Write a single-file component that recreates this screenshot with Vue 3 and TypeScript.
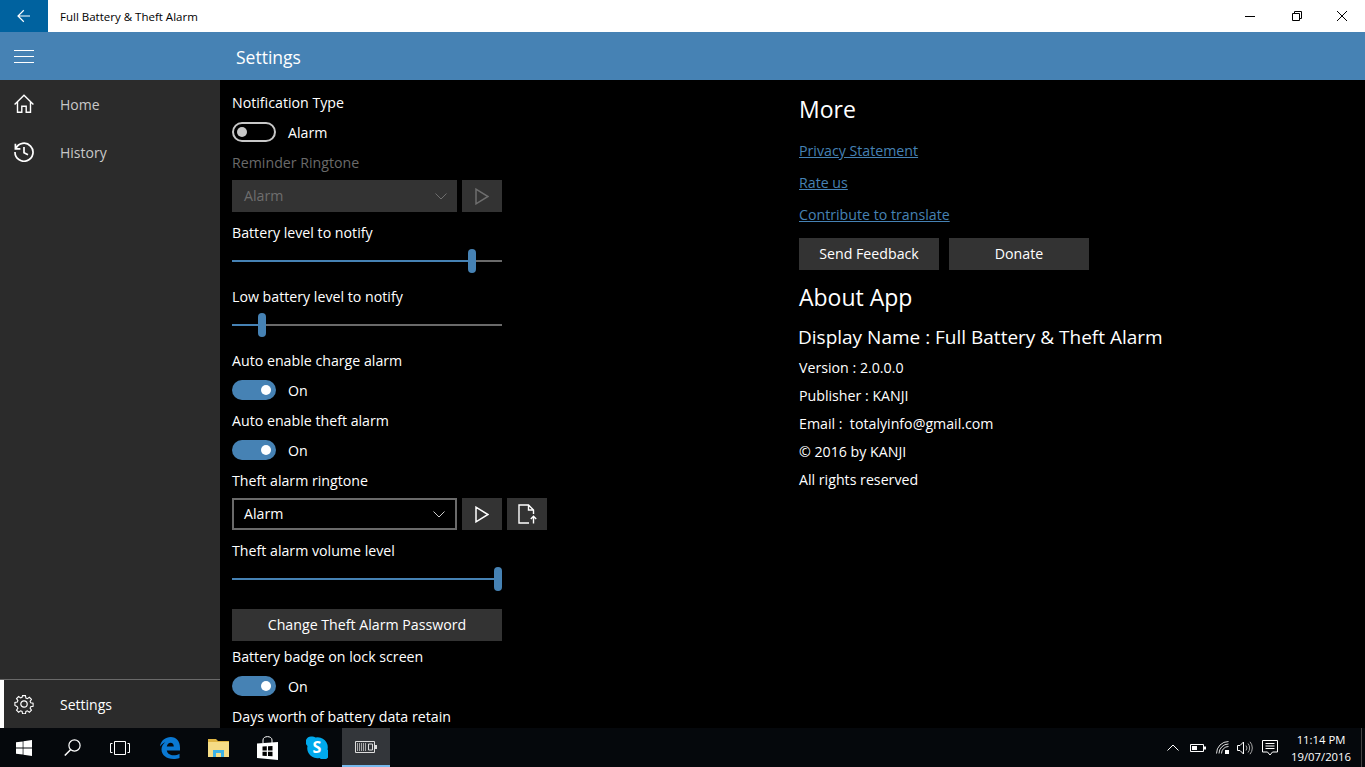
<script setup lang="ts">
const nav = [{ label: 'Home' }, { label: 'History' }]
const about = ['Version : 2.0.0.0', 'Publisher : KANJI', 'Email :  totalyinfo@gmail.com', '© 2016 by KANJI', 'All rights reserved']
</script>

<template>
  <div class="screen">
    <div class="titlebar">
      <div class="back">
        <svg width="14" height="14" viewBox="0 0 14 14" fill="none" stroke="#fff" stroke-width="1.2"><path d="M1 7h12M6.800 1.300 1 7l5.800 5.700" /></svg>
      </div>
      <div class="apptitle">Full Battery &amp; Theft Alarm</div>
      <div class="winbtns">
        <div class="winbtn"><svg width="12" height="12" viewBox="0 0 12 12" stroke="#000" fill="none"><path d="M1 6.500h10" /></svg></div>
        <div class="winbtn"><svg width="12" height="12" viewBox="0 0 12 12" stroke="#000" fill="none"><path d="M2.500 3.500h7v7h-7zM4.500 3.500v-2h7v7h-2" /></svg></div>
        <div class="winbtn"><svg width="12" height="12" viewBox="0 0 12 12" stroke="#000" fill="none"><path d="M1 1l10 10M11 1 1 11" /></svg></div>
      </div>
    </div>
    <div class="header">
      <div class="burger"><span></span><span></span><span></span></div>
      <div class="pagetitle">Settings</div>
    </div>
    <div class="body">
      <aside class="sidebar">
        <div class="navlist">
          <div v-for="(n, i) in nav" :key="n.label" class="navitem">
            <svg v-if="i === 0" class="navicon" width="20" height="20" viewBox="0 0 20 20" fill="none" stroke="#fff" stroke-width="1.4"><path d="M.6 10.600 10 1.200l9.400 9.400M3.500 8v10.300h4.300v-6h4.400v6h4.300V8" /></svg>
            <svg v-else class="navicon" width="20" height="20" viewBox="0 0 20 20" fill="none" stroke="#fff" stroke-width="1.700"><path d="M1.800 6.500A9 9 0 1 1 1 10M1.400 1.800v5h5M10 5v5.800l4 2" /></svg>
            <span class="navlabel">{{ n.label }}</span>
          </div>
        </div>
        <div class="navsettings">
          <svg class="navicon" width="20" height="20" viewBox="0 0 20 20" fill="none" stroke="#fff" stroke-width="1.2"><circle cx="10" cy="10" r="3.200" /><path d="M8.400.8h3.200l.5 2.600 1.600.7 2.200-1.500 2.300 2.300-1.500 2.200.7 1.600 2.600.5v3.200l-2.600.5-.7 1.600 1.500 2.200-2.300 2.300-2.200-1.500-1.600.7-.5 2.600H8.400l-.5-2.600-1.600-.7-2.200 1.500-2.300-2.300 1.500-2.200-.7-1.600L0 11.600V8.400l2.600-.5.7-1.600-1.500-2.200 2.300-2.300 2.200 1.500 1.600-.7z" transform="translate(.9 .9) scale(.91)" /></svg>
          <span class="navlabel white">Settings</span>
        </div>
      </aside>
      <main class="content">
        <section class="left">
          <div class="label first">Notification Type</div>
          <div class="toggle-row">
            <span class="toggle off"><i></i></span><span>Alarm</span>
          </div>
          <div class="label dim">Reminder Ringtone</div>
          <div class="controls">
            <div class="select disabled"><span>Alarm</span><svg width="12" height="7" viewBox="0 0 12 7" fill="none" stroke="#6e6e6e"><path d="M.5.5 6 6l5.500-5.500" /></svg></div>
            <div class="iconbtn"><svg width="14" height="17" viewBox="0 0 14 17" fill="none" stroke="#6e6e6e" stroke-width="1.500"><path d="M1 1.200v14.600L13 8.500z" /></svg></div>
          </div>
          <div class="label gap5">Battery level to notify</div>
          <div class="slider"><div class="fill f1"></div><div class="thumb t1"></div></div>
          <div class="label gap8">Low battery level to notify</div>
          <div class="slider"><div class="fill f2"></div><div class="thumb t2"></div></div>
          <div class="label gap8">Auto enable charge alarm</div>
          <div class="toggle-row"><span class="toggle on"><i></i></span><span>On</span></div>
          <div class="label">Auto enable theft alarm</div>
          <div class="toggle-row"><span class="toggle on"><i></i></span><span>On</span></div>
          <div class="label">Theft alarm ringtone</div>
          <div class="controls">
            <div class="select active"><span>Alarm</span><svg width="12" height="7" viewBox="0 0 12 7" fill="none" stroke="#ccc"><path d="M.5.5 6 6l5.500-5.500" /></svg></div>
            <div class="iconbtn"><svg width="14" height="17" viewBox="0 0 14 17" fill="none" stroke="#fff" stroke-width="1.500"><path d="M1 1.200v14.600L13 8.500z" /></svg></div>
            <div class="iconbtn"><svg width="19" height="20" viewBox="0 0 19 20" fill="none" stroke="#fff" stroke-width="1.400"><path d="M11 19H1V1h9.500l5 5v4M10.500 1v5h5M15.500 19.500v-7M12.800 15l2.700-2.700 2.700 2.700" /></svg></div>
          </div>
          <div class="label gap5">Theft alarm volume level</div>
          <div class="slider"><div class="fill f3"></div><div class="thumb t3"></div></div>
          <div class="widebtn">Change Theft Alarm Password</div>
          <div class="label">Battery badge on lock screen</div>
          <div class="toggle-row"><span class="toggle on"><i></i></span><span>On</span></div>
          <div class="label">Days worth of battery data retain</div>
        </section>
        <section class="right">
          <h2 class="more">More</h2>
          <a class="link">Privacy Statement</a>
          <a class="link">Rate us</a>
          <a class="link">Contribute to translate</a>
          <div class="btnrow"><div class="btn">Send Feedback</div><div class="btn">Donate</div></div>
          <h2 class="aboutapp">About App</h2>
          <div class="display">Display Name : Full Battery &amp; Theft Alarm</div>
          <div v-for="a in about" :key="a" class="aboutline">{{ a }}</div>
        </section>
      </main>
    </div>
    <footer class="taskbar">
      <div class="tb"><svg width="16" height="16" viewBox="0 0 16 16" fill="#fff"><path d="M0 2.300 6.700 1.400v6.200H0zM7.400 1.300 16 0v7.600H7.400zM0 8.400h6.700v6.200L0 13.700zM7.400 8.400H16V16l-8.600-1.300z" /></svg></div>
      <div class="tb"><svg width="17" height="17" viewBox="0 0 17 17" fill="none" stroke="#fff" stroke-width="1.200"><circle cx="10.500" cy="6.500" r="5.600" /><path d="M6.500 10.700.8 16.500" stroke-width="1.500" /></svg></div>
      <div class="tb"><svg width="20" height="14" viewBox="0 0 20 14" fill="none" stroke="#fff"><path d="M4.500.5h11v13h-11zM2.500 2.500h-2v9h2M17.500 2.500h2v9h-2" /></svg></div>
      <div class="tb m2"><svg width="20" height="22" viewBox="0 0 20 22"><path fill="#0a78d2" fill-rule="evenodd" d="M0 9.500C.8 3.500 5.500 0 10.800 0 16.500 0 20 4.500 20 10.500v3H6.800c.4 3.200 3.500 4.700 6.700 4.700 2.200 0 4.300-.5 6-1.500V21c-2 .8-4 1-6 1C6.500 22 1.500 18 1.500 12.500c0-3 1.300-5.300 3.800-7.300C2.800 6.300 1.300 7.500 0 9.500zM6.800 9.500h7c0-2.200-1.300-3.800-3.200-3.800S7.200 7.300 6.800 9.500z" /></svg></div>
      <div class="tb"><svg width="21" height="18" viewBox="0 0 21 18"><path fill="#dfb544" d="M0 0h8l2 2h11v5H0z" /><path fill="#f5dc86" d="M0 3h21v15H0z" /><path fill="#3db2e6" d="M5 11h11v7h-3v-4H8v4H5z" /></svg></div>
      <div class="tb m1"><svg width="21" height="24" viewBox="0 0 21 24" fill="none"><path fill="#fff" d="M0 7.500 21 6v18L0 22z" /><path stroke="#fff" d="M6 7V4c0-4.500 9-4.500 9 0v3" /><path fill="#000" d="M5.500 10.500l4.300-.2v4.200H5.500zM11 10.200l4.500-.2v4.500H11zM5.500 15.700h4.300v4.200l-4.300-.2zM11 15.700h4.500v4.500l-4.500-.2z" /></svg></div>
      <div class="tb m2"><svg width="22" height="23" viewBox="0 0 22 23"><path fill="#00a9ec" d="M6 .5a5.500 5.500 0 0 1 3.500 1 10 10 0 0 1 12 12 5.500 5.500 0 0 1-8 8.500 10 10 0 0 1-12-12A5.500 5.500 0 0 1 6 .5z" /><text x="11" y="17" class="skype" text-anchor="middle">S</text></svg></div>
      <div class="tb activeapp"><svg width="22" height="12" viewBox="0 0 22 12" fill="none" stroke="#ddd"><path d="M.5.500h19v11H.500z" /><path d="M20 4h2v4h-2z" fill="#ddd" stroke="none" /><path stroke="#aaa" stroke-width="1" d="M2.500 2v8M4.500 2v8M6.500 2v8M8.500 2v8M10.500 2v8" /><path d="M13.500 3h4v6h-4z" /></svg></div>
      <div class="tray">
        <svg class="ti chev" width="12" height="7" viewBox="0 0 12 7" fill="none" stroke="#fff"><path d="M.5 6.500 6 1l5.500 5.500" /></svg>
        <svg class="ti batt" width="16" height="8" viewBox="0 0 16 8" fill="none" stroke="#fff"><path d="M.5.500h13v7H.500z" /><path d="M14 2.500h2v3h-2z" fill="#fff" stroke="none" /><path d="M2 2h5v4H2z" fill="#fff" stroke="none" /></svg>
        <svg class="ti wifi" width="14" height="13" viewBox="0 0 14 13" fill="none" stroke="#ddd"><path d="M.5 12.500a12 12 0 0 1 12-12M3 12.500a9.500 9.500 0 0 1 9.500-9.500M5.500 12.500a7 7 0 0 1 7-7" /><rect x="9" y="9" width="4" height="4" fill="#fff" stroke="none" /></svg>
        <svg class="ti vol" width="16" height="14" viewBox="0 0 16 14" fill="none" stroke="#fff"><path d="M.5 4.500h2.500L6.500 1v12L3 9.500H.5z" /><path stroke="#aaa" d="M9 4.500a4 4 0 0 1 0 5M11 2.500a7 7 0 0 1 0 9M13 .8a9.500 9.500 0 0 1 0 12.400" /></svg>
        <svg class="ti notif" width="16" height="16" viewBox="0 0 16 16" fill="none" stroke="#fff"><path d="M.5.500h15v11.500h-5L8 15 5.500 12h-5zM3.500 3.500h9M3.500 6h9M3.500 8.500h9" /></svg>
        <div class="clock"><div>11:14 PM</div><div>19/07/2016</div></div>
        <div class="showdesk"></div>
      </div>
    </footer>
  </div>
</template>

<style>
html, body { margin: 0; background: #000; }
</style>

<style scoped>
.screen { width: 1365px; height: 767px; display: flex; flex-direction: column; overflow: hidden; font-family: "Open Sans", "Noto Sans", sans-serif; color: #fff; font-size: 14.200px; background: #000; }
.titlebar { height: 32px; flex: none; background: #fff; display: flex; align-items: center; color: #000; }
.back { width: 48px; height: 32px; background: #00629f; display: flex; align-items: center; justify-content: center; }
.apptitle { margin-left: 12px; font-size: 11.500px; flex: 1; }
.winbtns { display: flex; }
.winbtn { width: 46px; height: 32px; display: flex; align-items: center; justify-content: center; }
.header { height: 48px; flex: none; background: #4682b4; display: flex; align-items: center; }
.burger { width: 220px; padding-left: 14px; box-sizing: border-box; display: flex; flex-direction: column; gap: 5px; }
.burger span { display: block; width: 20px; height: 1px; background: #fff; }
.pagetitle { margin-left: 16px; font-size: 17.500px; padding-top: 2px; }
.body { flex: 1; display: flex; min-height: 0; }
.sidebar { width: 220px; flex: none; background: #2b2b2b; display: flex; flex-direction: column; justify-content: space-between; }
.navlist { display: flex; flex-direction: column; }
.navitem { height: 48px; display: flex; align-items: center; }
.navicon { margin-left: 14px; flex: none; }
.navlabel { margin-left: 26px; color: #c8c8c8; font-size: 14px; }
.navlabel.white { color: #fff; }
.navsettings { height: 48px; border-top: 1px solid #6a6a6a; display: flex; align-items: center; box-shadow: inset 4px 0 0 #fff; }
.content { flex: 1; display: flex; min-width: 0; overflow: hidden; }
.left { width: 579px; flex: none; padding-left: 12px; box-sizing: border-box; }
.label { height: 30px; line-height: 32px; white-space: nowrap; }
.label.first { margin-top: 7px; }
.label.dim { color: #6a6a6a; }
.gap5 { margin-top: 5px; }
.gap8 { margin-top: 8px; }
.toggle-row { height: 30px; display: flex; align-items: center; gap: 12px; }
.toggle { width: 44px; height: 20px; box-sizing: border-box; border-radius: 10px; display: flex; align-items: center; padding: 0 5px; }
.toggle i { display: block; width: 10px; height: 10px; border-radius: 50%; }
.toggle.off { border: 2px solid #c8c8c8; padding: 0 3px; }
.toggle.off i { background: #c8c8c8; }
.toggle.on { background: #4682b4; justify-content: flex-end; }
.toggle.on i { background: #fff; }
.controls { display: flex; gap: 5px; margin-top: 3px; height: 32px; }
.select { width: 225px; height: 32px; box-sizing: border-box; display: flex; align-items: center; justify-content: space-between; padding: 0 10px 0 12px; }
.select span { margin-top: -2px; }
.select.disabled { background: #333; color: #6e6e6e; }
.select.active { border: 2px solid #6a6a6a; padding: 0 10px; }
.iconbtn { width: 40px; height: 32px; background: #333; display: flex; align-items: center; justify-content: center; }
.slider { width: 270px; height: 26px; position: relative; }
.slider::before { content: ""; position: absolute; left: 0; right: 0; top: 13px; height: 2px; background: #6a6a6a; }
.fill { position: absolute; left: 0; top: 13px; height: 2px; background: #4682b4; }
.thumb { position: absolute; top: 2px; width: 8px; height: 24px; border-radius: 4px; background: #4682b4; }
.f1 { width: 236px; } .t1 { left: 236px; }
.f2 { width: 26px; } .t2 { left: 26px; }
.f3 { width: 262px; } .t3 { left: 262px; }
.widebtn { width: 270px; height: 32px; margin-top: 18px; padding-bottom: 1px; box-sizing: border-box; background: #333; display: flex; align-items: center; justify-content: center; }
.right { flex: 1; }
.more { margin: 14px 0 0; height: 30px; line-height: 30px; font-size: 23px; font-weight: 400; }
.link { display: block; width: fit-content; height: 20px; line-height: 20px; margin-top: 12px; color: #4682b4; text-decoration: underline; }
.link:first-of-type { margin-top: 17px; }
.btnrow { display: flex; gap: 10px; margin-top: 13px; }
.btn { width: 140px; height: 32px; padding-bottom: 1px; box-sizing: border-box; background: #333; display: flex; align-items: center; justify-content: center; }
.aboutapp { margin: 12px 0 0; height: 30px; line-height: 30px; font-size: 23px; font-weight: 400; }
.display { margin: 11px 0 0 -1px; height: 28px; line-height: 28px; font-size: 19px; white-space: nowrap; }
.aboutline { height: 28px; line-height: 28px; white-space: pre; }
.display + .aboutline { margin-top: 3px; }
.taskbar { height: 39px; flex: none; background: #05080c; display: flex; align-items: center; }
.tb { width: 48px; height: 39px; flex: none; display: flex; align-items: center; justify-content: center; }
.m1 { margin-left: 1px; }
.m2 { margin-left: 2px; }
.activeapp { background: #33363a; border-bottom: 2px solid #76b9ed; box-sizing: border-box; margin-left: 1px; }
.skype { font: 700 16px "Open Sans", sans-serif; fill: #fff; }
.tray { margin-left: auto; display: flex; align-items: center; height: 39px; }
.chev { margin-right: 11px; }
.batt { margin-right: 10px; }
.wifi { margin-right: 7px; }
.vol { margin-right: 9px; }
.notif { margin-right: 3px; }
.clock { width: 80px; text-align: center; font-size: 11.300px; line-height: 17px; }
.showdesk { width: 1px; height: 39px; background: #444; margin-right: 3px; }
</style>
